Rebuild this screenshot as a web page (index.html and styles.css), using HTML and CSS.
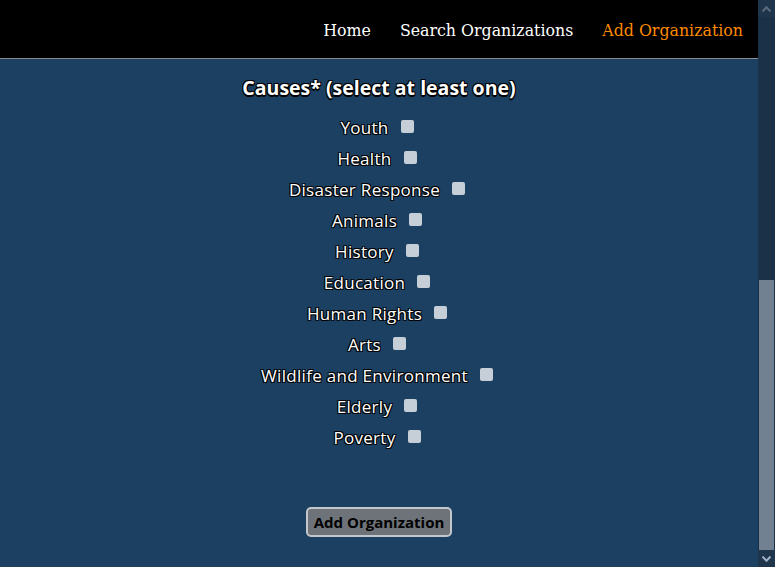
FILE: index.html
```html
<!DOCTYPE html>
<html lang="en">
<head>
<meta charset="utf-8">
<title>Add Organization</title>
<link rel="stylesheet" href="styles.css">
</head>
<body>
<div class="frame">
  <div class="page">
    <header class="nav">
      <a class="nav-link" href="#">Home</a>
      <a class="nav-link" href="#">Search Organizations</a>
      <a class="nav-link active" href="#">Add Organization</a>
    </header>
    <main class="content">
      <h2 class="title">Causes* (select at least one)</h2>
      <ul class="causes">
        <li class="cause"><label>Youth <input type="checkbox"></label></li>
        <li class="cause"><label>Health <input type="checkbox"></label></li>
        <li class="cause"><label>Disaster Response <input type="checkbox"></label></li>
        <li class="cause"><label>Animals <input type="checkbox"></label></li>
        <li class="cause"><label>History <input type="checkbox"></label></li>
        <li class="cause"><label>Education <input type="checkbox"></label></li>
        <li class="cause"><label>Human Rights <input type="checkbox"></label></li>
        <li class="cause"><label>Arts <input type="checkbox"></label></li>
        <li class="cause"><label>Wildlife and Environment <input type="checkbox"></label></li>
        <li class="cause"><label>Elderly <input type="checkbox"></label></li>
        <li class="cause"><label>Poverty <input type="checkbox"></label></li>
      </ul>
      <button class="submit" type="button">Add Organization</button>
    </main>
  </div>
  <div class="scrollbar">
    <div class="sb-btn">
      <svg width="9" height="6" viewBox="0 0 9 6"><path d="M0.5 5.5 L4.5 1.2 L8.5 5.5" fill="none" stroke="#5b6b7c" stroke-width="2"/></svg>
    </div>
    <div class="sb-track">
      <div class="sb-space"></div>
      <div class="sb-thumb"></div>
    </div>
    <div class="sb-btn">
      <svg width="9" height="6" viewBox="0 0 9 6"><path d="M0.5 0.5 L4.5 4.8 L8.5 0.5" fill="none" stroke="#9fb0c2" stroke-width="2"/></svg>
    </div>
  </div>
</div>
</body>
</html>
```
FILE: styles.css
```css
html, body {
  margin: 0;
  padding: 0;
  height: 100%;
  overflow: hidden;
}

body {
  background: #1c4061;
}

.frame {
  display: flex;
  height: 567px;
}

.page {
  flex: 1;
  display: flex;
  flex-direction: column;
  background: #1c4061;
}

.nav {
  height: 59px;
  box-sizing: border-box;
  padding: 3px 15px 0 0;
  background: #000;
  border-bottom: 1px solid #8a8a8a;
  display: flex;
  justify-content: flex-end;
  align-items: center;
  gap: 29px;
}

.nav-link {
  font-family: "DejaVu Serif", "Liberation Serif", serif;
  font-size: 15.8px;
  color: #ffffff;
  text-decoration: none;
}

.nav-link.active {
  color: #ff8a00;
}

.content {
  display: flex;
  flex-direction: column;
  align-items: center;
}

.title {
  margin: 15px 0 11px;
  font-family: "Open Sans", sans-serif;
  font-weight: 700;
  font-size: 19.5px;
  line-height: 27px;
  color: #fff;
  text-shadow: -1px -1px 0 #000, 1px -1px 0 #000, -1px 1px 0 #000, 1px 1px 0 #000, 0 1.5px 0 #000;
}

.causes {
  list-style: none;
  margin: 0;
  padding: 0;
  display: flex;
  flex-direction: column;
  align-items: center;
}

.cause label {
  display: flex;
  align-items: center;
  height: 31px;
  gap: 8px;
  font-family: "Open Sans", sans-serif;
  font-size: 17px;
  letter-spacing: 0.3px;
  color: #fff;
  text-shadow: -1px -1px 0 #000, 1px -1px 0 #000, -1px 1px 0 #000, 1px 1px 0 #000;
}

.cause input {
  appearance: none;
  -webkit-appearance: none;
  width: 13px;
  height: 13px;
  margin: 0 4px 3px 4px;
  background: #c6ced7;
  border-radius: 2px;
  border: none;
}

.submit {
  margin-top: 54px;
  font-family: "Open Sans", sans-serif;
  font-weight: 700;
  font-size: 15px;
  color: #000;
  background: #6e7379;
  border: 2px solid #c3c6ca;
  border-radius: 5px;
  padding: 3px 6px;
  height: 30px;
}

.scrollbar {
  width: 17px;
  display: flex;
  flex-direction: column;
  background: #1b3148;
}

.sb-btn {
  height: 17px;
  display: flex;
  align-items: center;
  justify-content: center;
  background: #1f354c;
}

.sb-track {
  flex: 1;
  display: flex;
  flex-direction: column;
}

.sb-space {
  height: 263px;
}

.sb-thumb {
  flex: 1;
  margin: 0 1px;
  background: #718192;
}
```
